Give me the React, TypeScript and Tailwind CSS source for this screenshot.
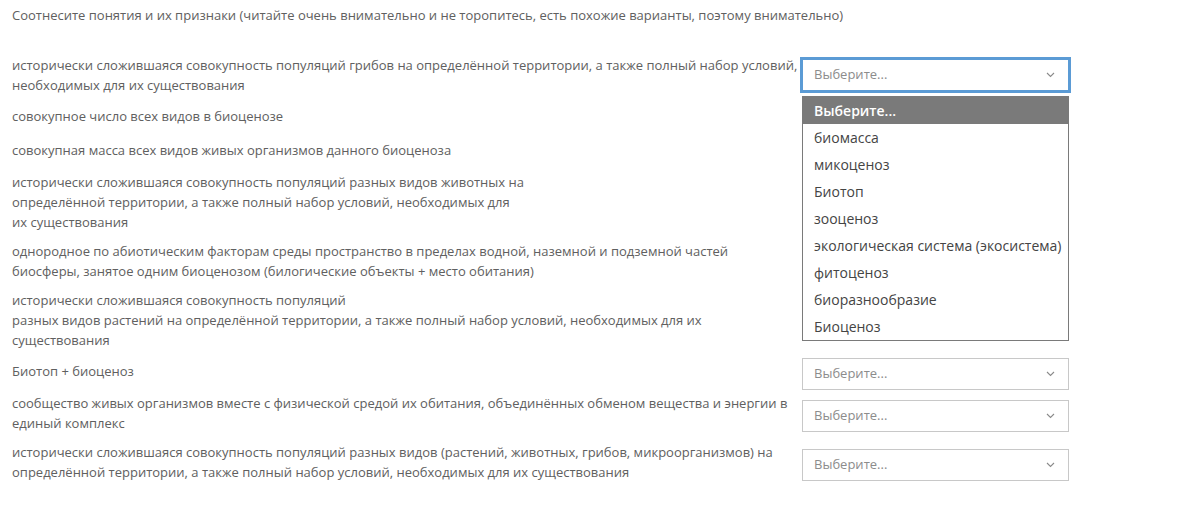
import React from "react";

type Row = { lines: string[] };

const rows: Row[] = [
  {
    lines: [
      "исторически сложившаяся совокупность популяций грибов на определённой территории, а также полный набор условий,",
      "необходимых для их существования",
    ],
  },
  { lines: ["совокупное число всех видов в биоценозе"] },
  { lines: ["совокупная масса всех видов живых организмов данного биоценоза"] },
  {
    lines: [
      "исторически сложившаяся совокупность популяций разных видов животных на",
      "определённой территории, а также полный набор условий, необходимых для",
      "их существования",
    ],
  },
  {
    lines: [
      "однородное по абиотическим факторам среды пространство в пределах водной, наземной и подземной частей",
      "биосферы, занятое одним биоценозом (билогические объекты + место обитания)",
    ],
  },
  {
    lines: [
      "исторически сложившаяся совокупность популяций",
      "разных видов растений на определённой территории, а также полный набор условий, необходимых для их",
      "существования",
    ],
  },
  { lines: ["Биотоп + биоценоз"] },
  {
    lines: [
      "сообщество живых организмов вместе с физической средой их обитания, объединённых обменом вещества и энергии в",
      "единый комплекс",
    ],
  },
  {
    lines: [
      "исторически сложившаяся совокупность популяций разных видов (растений, животных, грибов, микроорганизмов) на",
      "определённой территории, а также полный набор условий, необходимых для их существования",
    ],
  },
];

const options = [
  "Выберите...",
  "биомасса",
  "микоценоз",
  "Биотоп",
  "зооценоз",
  "экологическая система (экосистема)",
  "фитоценоз",
  "биоразнообразие",
  "Биоценоз",
];

function Chevron() {
  return (
    <svg width="9" height="6" viewBox="0 0 9 6" className="shrink-0">
      <polyline
        points="1,1 4.5,4.5 8,1"
        fill="none"
        stroke="#8a8a8a"
        strokeWidth="1.1"
      />
    </svg>
  );
}

function SelectBox({ open }: { open?: boolean }) {
  return (
    <div className={open ? "relative w-[267px]" : "relative w-[267px] translate-y-[3px]"}>
      <div
        className={
          open
            ? "flex h-[32px] items-center justify-between border border-[#5b9bd5] bg-white pl-[11px] pr-[13px] shadow-[0_0_0_2px_#5b9bd5]"
            : "flex h-[32px] items-center justify-between border border-[#c8c8c8] bg-white pl-[11px] pr-[13px]"
        }
      >
        <span className="text-[13px] text-[#8c8c8c]">Выберите...</span>
        <Chevron />
      </div>
      {open && (
        <ul className="absolute left-0 top-[calc(100%+5px)] z-10 w-full border border-[#7a7a7a] bg-white">
          {options.map((o, i) => (
            <li
              key={o}
              className={
                i === 0
                  ? "flex h-[27px] items-center whitespace-nowrap bg-[#7a7a7a] px-[11px] text-[14px] font-semibold text-white"
                  : "flex h-[27px] items-center whitespace-nowrap px-[11px] text-[14px] text-[#444]"
              }
            >
              {o}
            </li>
          ))}
        </ul>
      )}
    </div>
  );
}

export default function App() {
  return (
    <div className="min-h-[528px] bg-white pl-3 pt-[5px] font-['Open_Sans',sans-serif] text-[13px] text-[#606060]">
      <p className="leading-5 whitespace-nowrap">
        Соотнесите понятия и их признаки (читайте очень внимательно и не торопитесь, есть похожие варианты, поэтому внимательно)
      </p>
      <div className="mt-[25px] grid grid-cols-[790px_267px] items-center">
        {rows.map((r, i) => (
          <React.Fragment key={i}>
            <div className="py-[4.5px] leading-5 whitespace-nowrap">
              {r.lines.map((l, j) => (
                <React.Fragment key={j}>
                  {j > 0 && <br />}
                  {l}
                </React.Fragment>
              ))}
            </div>
            <div className="flex items-center py-px">
              <SelectBox open={i === 0} />
            </div>
          </React.Fragment>
        ))}
      </div>
    </div>
  );
}
